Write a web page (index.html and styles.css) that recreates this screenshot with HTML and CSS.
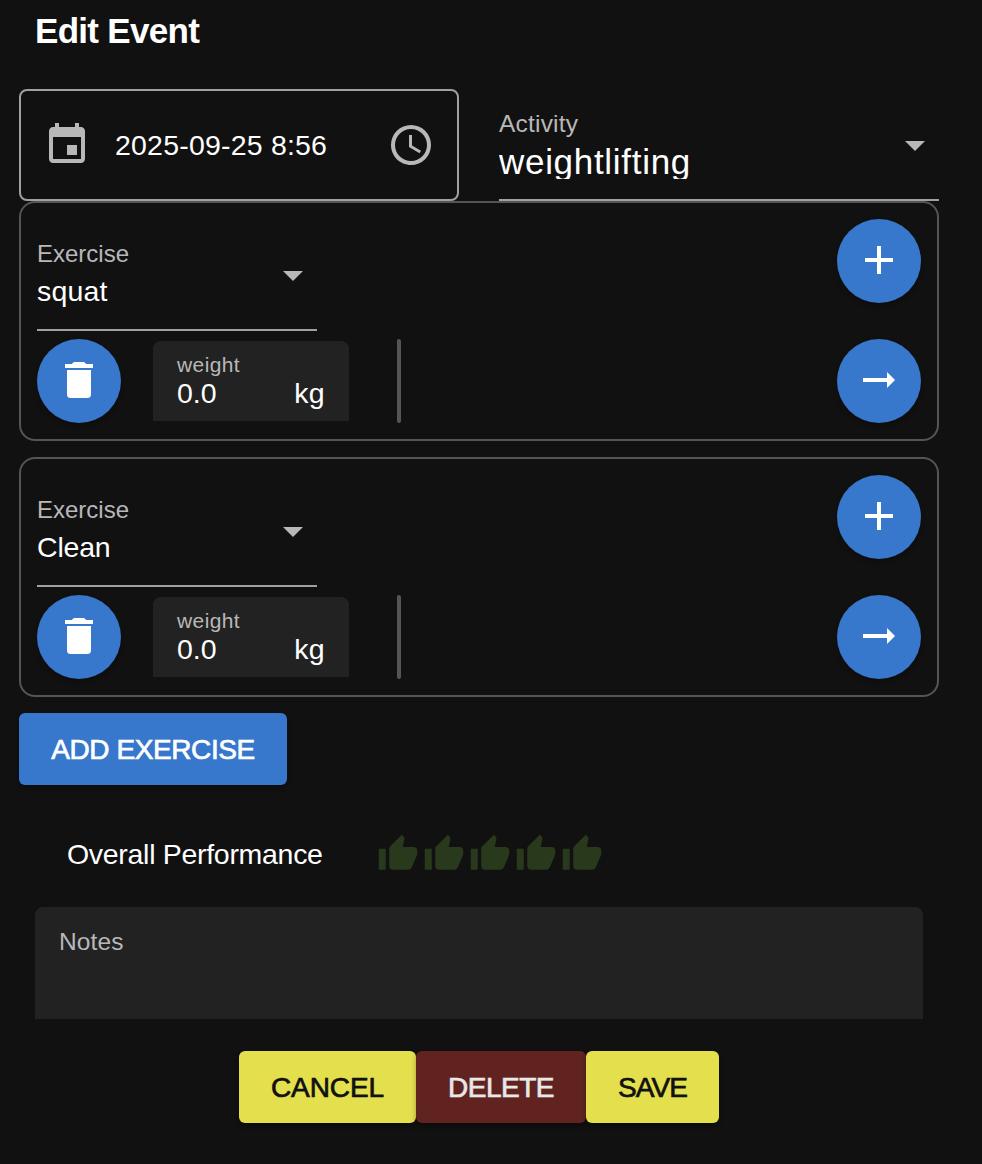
FILE: index.html
```
<!DOCTYPE html>
<html lang="en">
<head>
<meta charset="utf-8">
<title>Edit Event</title>
<link rel="stylesheet" href="styles.css">
</head>
<body>
<svg class="sprite" aria-hidden="true">
  <symbol id="event" viewBox="0 0 24 24"><path d="M17 12h-5v5h5v-5zM16 1v2H8V1H6v2H5c-1.11 0-1.99.9-1.99 2L3 19c0 1.1.89 2 2 2h14c1.1 0 2-.9 2-2V5c0-1.1-.9-2-2-2h-1V1h-2zm3 18H5V8h14v11z"/></symbol>
  <symbol id="clock" viewBox="0 0 24 24"><path d="M12 20a8 8 0 0 0 8-8 8 8 0 0 0-8-8 8 8 0 0 0-8 8 8 8 0 0 0 8 8m0-18a10 10 0 0 1 10 10 10 10 0 0 1-10 10C6.47 22 2 17.5 2 12A10 10 0 0 1 12 2m.5 5v5.25l4.5 2.67-.75 1.23L11 13V7h1.5z"/></symbol>
  <symbol id="caret" viewBox="0 0 24 24"><path d="M7 10l5 5 5-5z"/></symbol>
  <symbol id="plus" viewBox="0 0 24 24"><path d="M19 13h-6v6h-2v-6H5v-2h6V5h2v6h6v2z"/></symbol>
  <symbol id="trash" viewBox="0 0 24 24"><path d="M6 19.2c0 1.1.7 1.8 1.8 1.8h8.4c1.1 0 1.8-.7 1.8-1.8V7H6v12.200zM19 4h-3.500c-.4-.7-.9-1-1.700-1h-3.600c-.8 0-1.300.3-1.700 1H5v2h14V4z"/></symbol>
  <symbol id="arrow" viewBox="0 0 24 24"><path d="M16.01 11H4v2h12.01v3L20 12l-3.99-4v3z"/></symbol>
  <symbol id="thumb" viewBox="0 0 24 24"><path d="M1 21h4V9H1v12zm22-11c0-1.1-.9-2-2-2h-6.31l.95-4.57.03-.32c0-.41-.17-.79-.44-1.06L14.17 1 7.59 7.59C7.22 7.95 7 8.45 7 9v10c0 1.1.9 2 2 2h9c.83 0 1.54-.5 1.84-1.22l3.02-7.05c.09-.23.14-.47.14-.73v-2z"/></symbol>
</svg>
<main class="page">
  <h1 class="title">Edit Event</h1>

  <div class="top">
    <div class="date">
      <svg class="icon"><use href="#event"/></svg>
      <span class="date-value">2025-09-25 8:56</span>
      <svg class="icon"><use href="#clock"/></svg>
    </div>
    <div class="select activity">
      <div class="select-text">
        <span class="label activity-label">Activity</span>
        <span class="activity-value">weightlifting</span>
      </div>
      <svg class="icon caret"><use href="#caret"/></svg>
    </div>
  </div>

  <section class="card">
    <div class="row">
      <div class="select exercise">
        <div class="select-text">
          <span class="label">Exercise</span>
          <span class="value squat">squat</span>
        </div>
        <svg class="icon caret"><use href="#caret"/></svg>
      </div>
      <button class="fab"><svg class="icon"><use href="#plus"/></svg></button>
    </div>
    <div class="row sets">
      <button class="fab"><svg class="icon"><use href="#trash"/></svg></button>
      <div class="weight">
        <span class="weight-label">weight</span>
        <div class="weight-line"><span class="number">0.0</span><span class="unit">kg</span></div>
      </div>
      <div class="bar"></div>
      <button class="fab last"><svg class="icon"><use href="#arrow"/></svg></button>
    </div>
  </section>

  <section class="card">
    <div class="row">
      <div class="select exercise">
        <div class="select-text">
          <span class="label">Exercise</span>
          <span class="value">Clean</span>
        </div>
        <svg class="icon caret"><use href="#caret"/></svg>
      </div>
      <button class="fab"><svg class="icon"><use href="#plus"/></svg></button>
    </div>
    <div class="row sets">
      <button class="fab"><svg class="icon"><use href="#trash"/></svg></button>
      <div class="weight">
        <span class="weight-label">weight</span>
        <div class="weight-line"><span class="number">0.0</span><span class="unit">kg</span></div>
      </div>
      <div class="bar"></div>
      <button class="fab last"><svg class="icon"><use href="#arrow"/></svg></button>
    </div>
  </section>

  <button class="btn add">ADD EXERCISE</button>

  <div class="performance">
    <span class="performance-label">Overall Performance</span>
    <div class="thumbs">
      <svg class="thumb"><use href="#thumb"/></svg>
      <svg class="thumb"><use href="#thumb"/></svg>
      <svg class="thumb"><use href="#thumb"/></svg>
      <svg class="thumb"><use href="#thumb"/></svg>
      <svg class="thumb"><use href="#thumb"/></svg>
    </div>
  </div>

  <div class="notes"><span class="label notes-label">Notes</span></div>

  <div class="actions">
    <button class="btn cancel">CANCEL</button>
    <button class="btn delete">DELETE</button>
    <button class="btn save">SAVE</button>
  </div>
</main>
</body>
</html>
```
FILE: styles.css
```
* { box-sizing: border-box; }
body {
  margin: 0;
  height: 1164px;
  overflow: hidden;
  background: #111;
  color: #fff;
  font: 28.5px "Liberation Sans", Arial, sans-serif;
}
.sprite { display: none; }
.page { width: 939px; padding-left: 19px; }
.icon { display: block; width: 48px; height: 48px; flex: none; fill: #b8b8b8; }
button { border: 0; padding: 0; font: inherit; color: #fff; }

.title {
  margin: 0 0 27px;
  padding-left: 16px;
  font-size: 35px;
  line-height: 62px;
  letter-spacing: -.7px;
}

.top { display: flex; gap: 40px; }
.date {
  display: flex;
  align-items: center;
  width: 440px;
  height: 112px;
  padding: 0 22px;
  border: 2px solid #a0a0a0;
  border-radius: 8px;
}
.date-value { flex: 1; padding-left: 24px; font-size: 28.5px; letter-spacing: .2px; }

.select {
  display: flex;
  height: 112px;
  border-bottom: 2px solid #a0a0a0;
}
.select-text { display: flex; flex: 1; flex-direction: column; padding-top: 18px; }
.label { color: #b8b8b8; font-size: 24px; line-height: 33px; }
.caret { margin-top: 32px; }
.activity { width: 440px; }
.activity-label { font-size: 24.5px; letter-spacing: .2px; }
.activity-value {
  height: 34px;
  margin-top: 5px;
  overflow: hidden;
  font-size: 35px;
  line-height: 34px;
  letter-spacing: .7px;
}
.exercise { width: 280px; }
.value { margin-top: 2px; line-height: 38px; letter-spacing: -.2px; }
.squat { letter-spacing: .2px; }

.card {
  height: 240px;
  margin-bottom: 16px;
  padding: 16px;
  border: 2px solid #555;
  border-radius: 16px;
}
.row { display: flex; justify-content: space-between; }
.sets { justify-content: flex-start; margin-top: 8px; }
.fab {
  display: flex;
  align-items: center;
  justify-content: center;
  width: 84px;
  height: 84px;
  padding-bottom: 2px;
  border-radius: 50%;
  background: #3777cc;
  box-shadow: 0 3px 5px rgba(0, 0, 0, .25);
}
.fab .icon { fill: #fff; }
.last { margin-left: auto; }
.weight {
  display: flex;
  flex-direction: column;
  width: 196px;
  height: 80px;
  margin: 2px 48px 0 32px;
  padding: 12px 24px 0;
  border-radius: 8px 8px 0 0;
  background: #222;
}
.weight-label { color: #b8b8b8; font-size: 21px; line-height: 24px; letter-spacing: .4px; }
.weight-line { display: flex; justify-content: space-between; margin-top: 2px; line-height: 28px; }
.number { letter-spacing: 0; }
.unit { letter-spacing: .3px; }
.bar { width: 4px; height: 84px; border-radius: 2px; background: #555; }

.btn {
  display: block;
  height: 72px;
  padding-top: 2px;
  border-radius: 6px;
  text-align: center;
  line-height: 70px;
  white-space: nowrap;
  font-size: 28px;
  -webkit-text-stroke: .7px currentColor;
  box-shadow: 0 3px 5px rgba(0, 0, 0, .3);
}
.add { width: 268px; background: #3777cc; letter-spacing: -.4px; }

.performance { display: flex; align-items: center; height: 42px; margin-top: 48px; padding-left: 48px; }
.performance-label { width: 310px; letter-spacing: -.3px; }
.thumbs { display: flex; gap: 4px; }
.thumb { width: 42px; height: 42px; fill: #29391c; }

.notes {
  height: 112px;
  margin: 32px 16px;
  padding: 18px 24px;
  border-radius: 8px 8px 0 0;
  background: #222;
}
.notes-label { display: block; font-size: 24.5px; letter-spacing: .15px; }

.actions { display: flex; justify-content: center; }
.cancel { width: 177px; background: #e3df4d; color: #111; letter-spacing: -.1px; }
.delete { width: 170px; background: #602320; color: #e8e8e8; letter-spacing: -.5px; }
.save { width: 133px; background: #e3df4d; color: #111; letter-spacing: -.9px; }
```
